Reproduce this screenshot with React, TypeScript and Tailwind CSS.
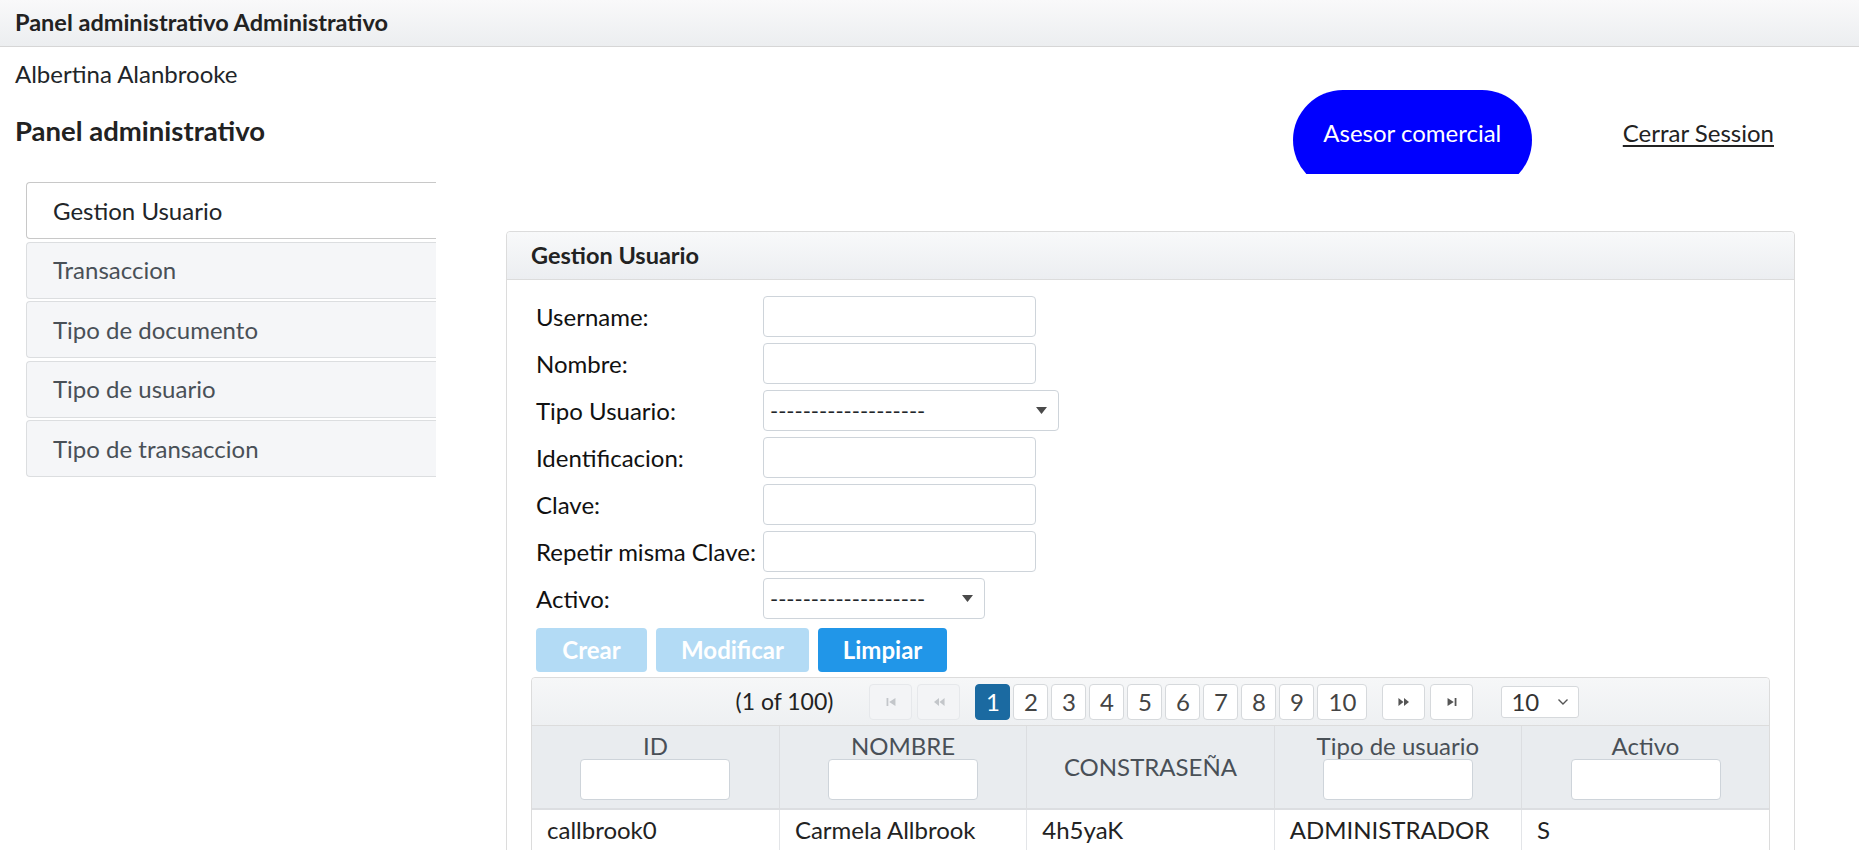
import React from "react";

const menu = [
  "Gestion Usuario",
  "Transaccion",
  "Tipo de documento",
  "Tipo de usuario",
  "Tipo de transaccion",
];

const rows = [
  { id: "callbrook0", nombre: "Carmela Allbrook", clave: "4h5yaK", tipo: "ADMINISTRADOR", activo: "S" },
  { id: "dmaccaughen1", nombre: "Dario MacCaughen", clave: "Qm2pLx", tipo: "ASESOR", activo: "S" },
  { id: "rkemmet2", nombre: "Rosa Kemmet", clave: "z9TtRw", tipo: "CLIENTE", activo: "N" },
];

const Arrow = () => (
  <svg width="11" height="7" viewBox="0 0 11 7" className="text-[#4a4a4a]">
    <path d="M0 0h11L5.5 7z" fill="currentColor" />
  </svg>
);

const TextInput = ({ w = "w-[273px]" }: { w?: string }) => (
  <div className={`${w} h-[41px] rounded-[4px] border border-[#ced4da] bg-white`} />
);

const Select = ({ w }: { w: string }) => (
  <div className={`${w} h-[41px] rounded-[4px] border border-[#ced4da] bg-white flex items-center justify-between pl-[6px] pr-[11px]`}>
    <span className="text-[22px] leading-none text-[#212529]">-------------------</span>
    <Arrow />
  </div>
);

const PagerIcon = ({ kind }: { kind: "first" | "prev" | "next" | "last" }) => {
  const paths: Record<string, string> = {
    first: "M1 1h1.6v7H1zM9 1v7L3.4 4.5z",
    prev: "M5 1v7L0.5 4.5zM10 1v7L5.5 4.5z",
    next: "M0 1l4.5 3.5L0 8zM5 1l4.5 3.5L5 8z",
    last: "M1 1l5.6 3.5L1 8zM7.4 1H9v7H7.4z",
  };
  return (
    <svg width="12" height="10" viewBox="0 0 10 9">
      <path d={paths[kind]} fill="currentColor" />
    </svg>
  );
};

const PageNav = ({ kind, disabled }: { kind: "first" | "prev" | "next" | "last"; disabled?: boolean }) => (
  <div
    className={`w-[43px] h-[36px] rounded-[4px] border flex items-center justify-center ${
      disabled ? "border-[#e6e8eb] bg-[#f3f4f6] text-[#c3c6ca]" : "border-[#d6d9dc] bg-white text-[#555]"
    }`}
  >
    <PagerIcon kind={kind} />
  </div>
);

export default function App() {
  const labels = [
    "Username:",
    "Nombre:",
    "Tipo Usuario:",
    "Identificacion:",
    "Clave:",
    "Repetir misma Clave:",
    "Activo:",
  ];

  return (
    <div className="min-h-screen bg-white text-[#212529] font-['Lato','Open_Sans',sans-serif]">
      <header className="h-[47px] border-b border-[#d6d6d6] bg-gradient-to-b from-[#f9f9fa] to-[#eceef0] flex items-center px-[15px]">
        <span className="text-[23.5px] font-bold text-[#222]">Panel administrativo Administrativo</span>
      </header>

      <div className="flex">
        <aside className="w-[436px] shrink-0">
          <div className="pl-[15px] pt-[12px] text-[24px] leading-[29px]">Albertina Alanbrooke</div>
          <h2 className="pl-[15px] pt-[26px] text-[27.5px] leading-[34px] font-bold text-[#222]">Panel administrativo</h2>
          <nav className="ml-[26px] mt-[34px] flex flex-col gap-[2.5px]">
            {menu.map((m, i) => (
              <div
                key={m}
                className={`h-[57px] flex items-center pl-[26px] rounded-l-[4px] border-l border-y text-[24px] ${
                  i === 0
                    ? "bg-white border-[#c8c8c8] text-[#212529]"
                    : "bg-[#f5f6f8] border-[#dcdee0] text-[#495057]"
                }`}
              >
                {m}
              </div>
            ))}
          </nav>
        </aside>

        <main className="flex-1 ml-[70px] mr-[64px]">
          <div className="flex justify-end items-start pt-[43px] pr-[21px]">
            <div className="h-[84px] overflow-hidden">
              <div className="w-[239px] h-[100px] rounded-[50px] bg-[#0000ff] text-white text-[24px] leading-[29px] flex justify-center pt-[28px]">
                Asesor comercial
              </div>
            </div>
            <a className="ml-[91px] mt-[28px] text-[24px] leading-[29px] underline underline-offset-[3px] text-[#222]">
              Cerrar Session
            </a>
          </div>

          <section className="mt-[57px] border border-[#dcdcdc] rounded-t-[4px]">
            <div className="h-[48px] border-b border-[#dcdcdc] bg-gradient-to-b from-[#f8f9fa] to-[#eceef1] flex items-center px-[24px] rounded-t-[4px]">
              <span className="text-[23.5px] font-bold text-[#222]">Gestion Usuario</span>
            </div>

            <div className="px-[24px] pt-[16px] pb-[20px]">
              <div className="pl-[5px] grid grid-cols-[227px_1fr] gap-y-[6px]">
                {labels.map((l, i) => (
                  <React.Fragment key={l}>
                    <div className="h-[41px] flex items-center text-[24px] text-[#111] whitespace-nowrap">{l}</div>
                    <div className="h-[41px]">
                      {i === 2 ? <Select w="w-[296px]" /> : i === 6 ? <Select w="w-[222px]" /> : <TextInput />}
                    </div>
                  </React.Fragment>
                ))}
              </div>

              <div className="pl-[5px] mt-[9px] flex gap-[9px]">
                <div className="w-[111px] h-[44px] rounded-[4px] bg-[#b3dbf5] text-white text-[24px] font-bold flex items-center justify-center">Crear</div>
                <div className="w-[153px] h-[44px] rounded-[4px] bg-[#b3dbf5] text-white text-[24px] font-bold flex items-center justify-center">Modificar</div>
                <div className="w-[129px] h-[44px] rounded-[4px] bg-[#2196e8] text-white text-[24px] font-bold flex items-center justify-center">Limpiar</div>
              </div>

              <div className="mt-[5px] border border-[#dcdcdc] rounded-t-[4px]">
                <div className="h-[48px] pl-[14px] bg-gradient-to-b from-[#f6f7f8] to-[#eef0f2] border-b border-[#dcdcdc] flex items-center justify-center rounded-t-[4px]">
                  <span className="text-[23px] text-[#222] mr-[36px]">(1 of 100)</span>
                  <div className="flex gap-[5px]">
                    <PageNav kind="first" disabled />
                    <PageNav kind="prev" disabled />
                  </div>
                  <div className="flex gap-[3px] ml-[15px]">
                    {[1, 2, 3, 4, 5, 6, 7, 8, 9, 10].map((p) => (
                      <div
                        key={p}
                        className={`${p === 10 ? "w-[50px]" : "w-[35px]"} h-[36px] rounded-[4px] border flex items-center justify-center text-[24px] ${
                          p === 1 ? "bg-[#1b6aa1] border-[#1b6aa1] text-white" : "bg-white border-[#d6d9dc] text-[#444]"
                        }`}
                      >
                        {p}
                      </div>
                    ))}
                  </div>
                  <div className="flex gap-[5px] ml-[15px]">
                    <PageNav kind="next" />
                    <PageNav kind="last" />
                  </div>
                  <div className="ml-[28px] w-[78px] h-[32px] rounded-[3px] border border-[#d6d9dc] bg-white flex items-center justify-between pl-[9px] pr-[9px]">
                    <span className="text-[24px] text-[#333]">10</span>
                    <svg width="12" height="8" viewBox="0 0 12 8" className="text-[#555]">
                      <path d="M1.5 1.5l4.5 4.5 4.5-4.5" stroke="currentColor" strokeWidth="1.4" fill="none" />
                    </svg>
                  </div>
                </div>

                <table className="w-full table-fixed border-collapse">
                  <thead>
                    <tr className="bg-[#e9ecef]">
                      {["ID", "NOMBRE", "CONSTRASEÑA", "Tipo de usuario", "Activo"].map((h, i) => (
                        <th
                          key={h}
                          className="h-[83px] border-r last:border-r-0 border-b-2 border-[#dcdee1] font-normal text-[24px] text-[#495057] align-middle px-[8px]"
                        >
                          <div className="flex flex-col items-center">
                            <span className="leading-[24px]">{h}</span>
                            {i !== 2 && (
                              <div className="mt-[1px] w-[150px] h-[41px] rounded-[4px] border border-[#ced4da] bg-white" />
                            )}
                          </div>
                        </th>
                      ))}
                    </tr>
                  </thead>
                  <tbody>
                    {rows.map((r) => (
                      <tr key={r.id} className="border-b border-[#e3e5e8]">
                        {[r.id, r.nombre, r.clave, r.tipo, r.activo].map((c, j) => (
                          <td key={j} className="h-[41px] px-[15px] text-[24px] text-[#222] border-r last:border-r-0 border-[#e3e5e8]">
                            {c}
                          </td>
                        ))}
                      </tr>
                    ))}
                  </tbody>
                </table>
              </div>
            </div>
          </section>
        </main>
      </div>
    </div>
  );
}
